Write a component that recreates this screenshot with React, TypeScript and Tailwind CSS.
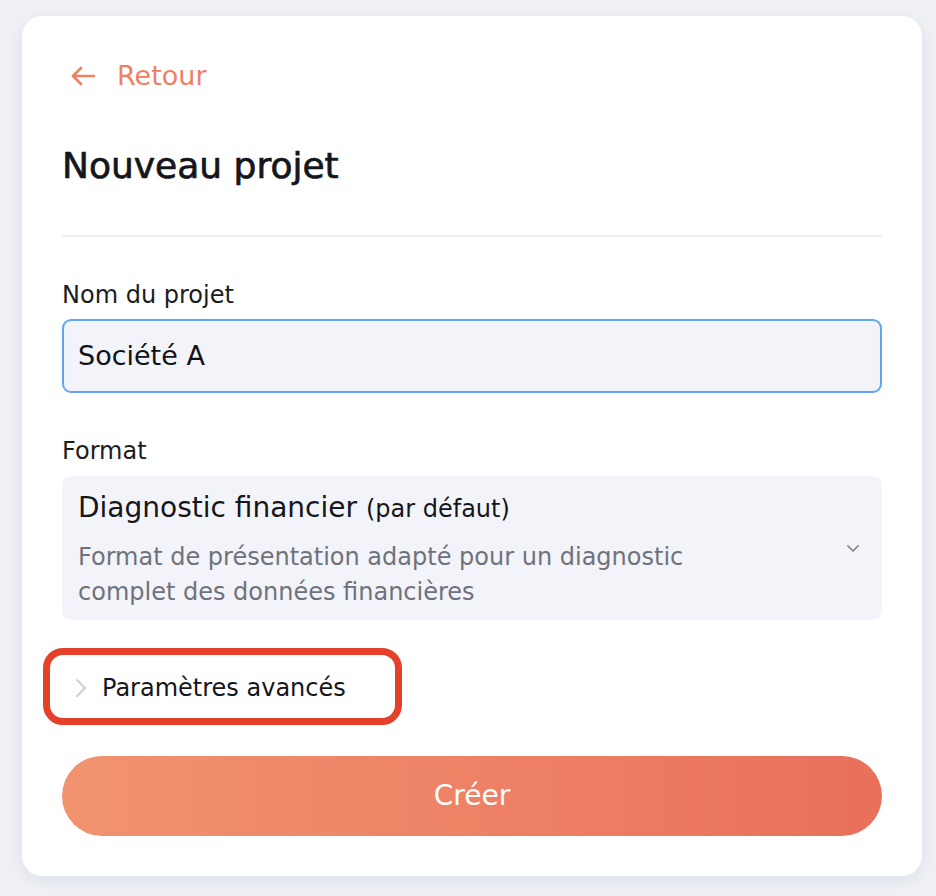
import React from 'react';

const font = { fontFamily: '"DejaVu Sans", "Noto Sans", sans-serif' };

function ArrowLeft() {
  return (
    <svg width="26" height="20" viewBox="0 0 26 20" fill="none" stroke="currentColor" strokeWidth="2.6" strokeLinecap="round" strokeLinejoin="round">
      <path d="M24 10H3" />
      <path d="M11 2L3 10l8 8" />
    </svg>
  );
}

function ChevronDown() {
  return (
    <svg width="18" height="18" viewBox="0 0 24 24" fill="none" stroke="currentColor" strokeWidth="2" strokeLinecap="round" strokeLinejoin="round">
      <path d="M5 9l7 7 7-7" />
    </svg>
  );
}

function ChevronRight() {
  return (
    <svg width="14" height="20" viewBox="0 0 14 20" fill="none" stroke="currentColor" strokeWidth="2" strokeLinecap="round" strokeLinejoin="round">
      <path d="M3 2l8 8-8 8" />
    </svg>
  );
}

export default function App() {
  return (
    <div className="min-h-[896px] w-[936px] bg-[#eef0f5] pt-4 pl-[22px]" style={font}>
      <div className="w-[900px] h-[860px] rounded-[20px] bg-white shadow-[0_4px_14px_rgba(30,40,80,0.08)] px-10 pt-[44px]">
        <button className="flex items-center gap-[21px] text-[#ef8064] pl-2">
          <ArrowLeft />
          <span className="text-[27px] leading-8">Retour</span>
        </button>

        <h1 className="mt-[56px] text-[36px] text-[#15161c] leading-[36px] [-webkit-text-stroke:0.7px_#15161c]">Nouveau projet</h1>

        <div className="mt-[51px] h-[2px] bg-[#eff0f4]" />

        <div className="mt-[44px]">
          <label className="block text-[24px] leading-7 text-[#1b1c22]">Nom du projet</label>
          <div className="mt-[10px] h-[74px] rounded-[9px] border-2 border-[#63a4f4] bg-[#f3f4f9] flex items-center px-[14px]">
            <span className="text-[27px] text-[#111218]">Société A</span>
          </div>
        </div>

        <div className="mt-[44px]">
          <label className="block text-[24px] leading-7 text-[#1b1c22]">Format</label>
          <div className="mt-[11px] h-[144px] rounded-[9px] bg-[#f3f4f9] flex items-start pl-4 pr-5 pt-4">
            <div className="flex-1">
              <div className="text-[28px] leading-8 text-[#15161c]">
                Diagnostic financier <span className="text-[24px]">(par défaut)</span>
              </div>
              <div className="mt-[15px] text-[24px] leading-[35px] text-[#6f727b]">
                Format de présentation adapté pour un diagnostic
                <br />
                complet des données financières
              </div>
            </div>
            <span className="mt-[47px] text-[#7c7f88]"><ChevronDown /></span>
          </div>
        </div>

        <div className="mt-[28px] -ml-[19px] w-[359px] h-[77px] rounded-[20px] border-[7px] border-[#e5412a] flex items-center pl-[24px] gap-[14px] pt-[3px]">
          <span className="text-[#cdced5]"><ChevronRight /></span>
          <span className="text-[24px] text-[#15161c]">Paramètres avancés</span>
        </div>

        <button className="mt-[31px] w-full h-[80px] rounded-full bg-gradient-to-r from-[#f19370] to-[#e9705b] text-white text-[28px]">
          Créer
        </button>
      </div>
    </div>
  );
}
